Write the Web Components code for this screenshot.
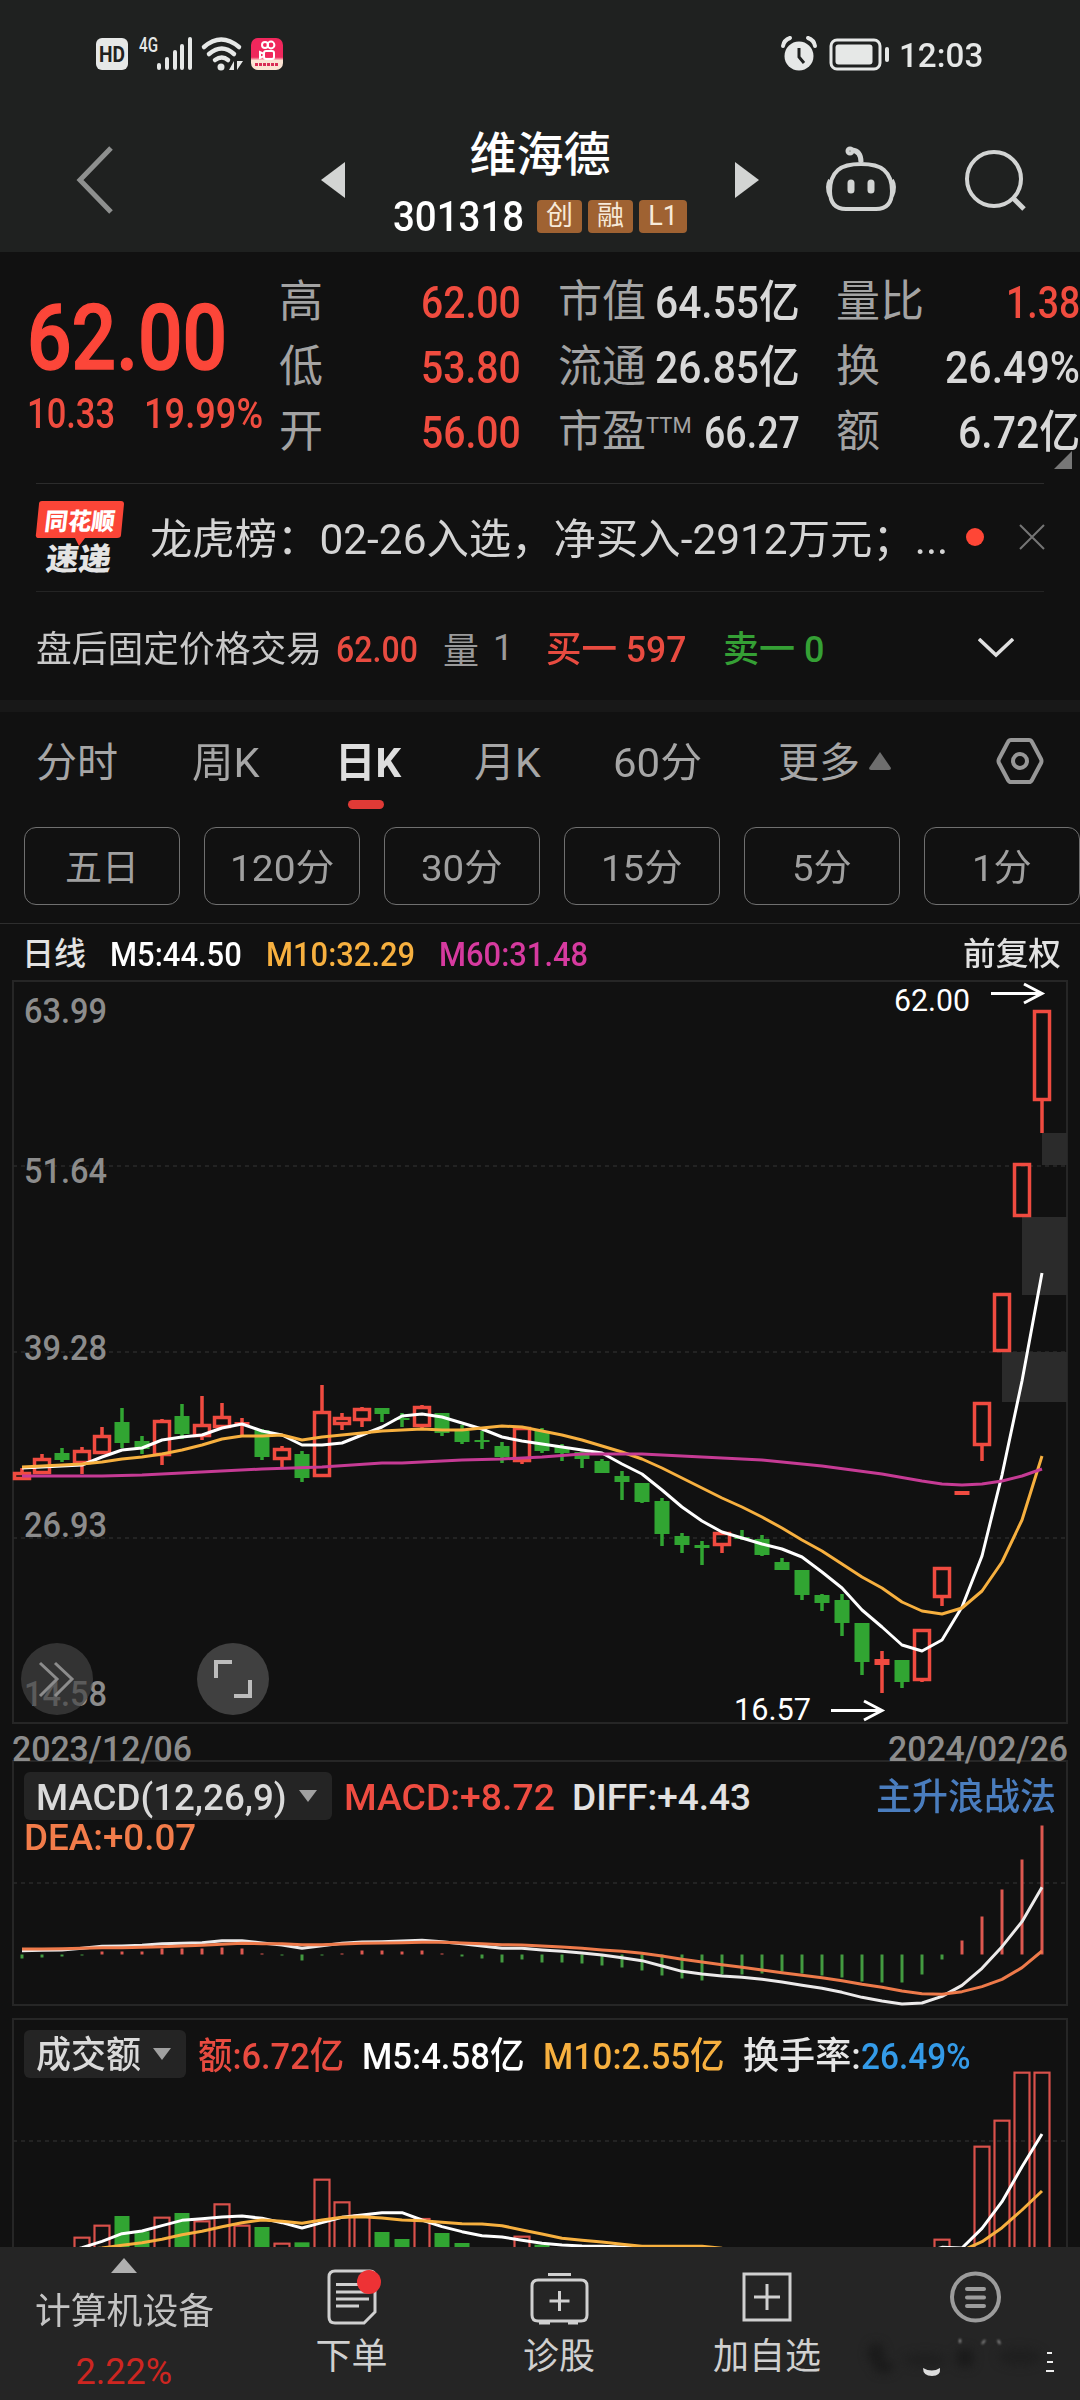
<!DOCTYPE html>
<html lang="zh-CN">
<head>
<meta charset="utf-8">
<title>维海德 301318</title>
<style>
    body {
        margin: 0;
        width: 1080px;
        height: 2400px;
        overflow: hidden;
        background: #111;
        color: #d0d0d0;
        font-family: Roboto, "Noto Sans CJK SC", sans-serif;
    }
</style>
</head>
<body>
<stock-app></stock-app>

<script>
const COLORS = {
    up: '#f04b40',
    down: '#31a532',
    ma5: '#ffffff',
    ma10: '#f7b03f',
    ma60: '#c63b95',
    dea: '#ee7a4a',
    grid: '#262626'
};

const STEP = 20;
const FIRST_X = 22;

// [direction, high, body top, body bottom, low]
const CANDLES = [
    ['r', 1468, 1472, 1480, 1480], ['r', 1454, 1458, 1474, 1474], ['g', 1448, 1453, 1460, 1462],
    ['r', 1447, 1450, 1464, 1474], ['r', 1427, 1435, 1454, 1454], ['g', 1408, 1422, 1443, 1448],
    ['g', 1436, 1441, 1449, 1454], ['r', 1419, 1420, 1456, 1465], ['g', 1404, 1416, 1434, 1439],
    ['r', 1396, 1424, 1437, 1440], ['r', 1403, 1416, 1428, 1428], ['r', 1418, 1422, 1425, 1437],
    ['g', 1429, 1430, 1457, 1460], ['r', 1446, 1448, 1460, 1468], ['g', 1451, 1454, 1478, 1482],
    ['r', 1385, 1411, 1477, 1477], ['r', 1413, 1417, 1425, 1430], ['r', 1407, 1408, 1421, 1427],
    ['g', 1408, 1408, 1414, 1422], ['g', 1413, 1418, 1420, 1427], ['r', 1405, 1406, 1427, 1429],
    ['g', 1413, 1413, 1433, 1436], ['g', 1425, 1431, 1442, 1444], ['g', 1431, 1440, 1442, 1449],
    ['g', 1442, 1446, 1457, 1463], ['r', 1427, 1427, 1462, 1464], ['g', 1428, 1431, 1451, 1453],
    ['g', 1444, 1447, 1453, 1461], ['g', 1451, 1452, 1459, 1468], ['g', 1459, 1461, 1473, 1473],
    ['g', 1471, 1476, 1482, 1500], ['g', 1483, 1483, 1502, 1503], ['g', 1498, 1501, 1534, 1546],
    ['g', 1533, 1536, 1545, 1553], ['g', 1541, 1545, 1548, 1565], ['r', 1532, 1532, 1546, 1553],
    ['g', 1530, 1537, 1539, 1540], ['g', 1535, 1539, 1555, 1556], ['g', 1558, 1562, 1570, 1570],
    ['g', 1570, 1570, 1595, 1600], ['g', 1594, 1595, 1603, 1611], ['g', 1594, 1600, 1623, 1636],
    ['g', 1623, 1623, 1662, 1675], ['r', 1651, 1659, 1665, 1693], ['g', 1660, 1660, 1682, 1688],
    ['r', 1629, 1629, 1681, 1682], ['r', 1567, 1567, 1598, 1606], ['r', 1491, 1491, 1495, 1495],
    ['r', 1402, 1402, 1446, 1461], ['r', 1293, 1293, 1352, 1352], ['r', 1163, 1163, 1217, 1217],
    ['r', 1010, 1010, 1101, 1133]
];

const MA5 = [1468, 1467, 1466, 1465, 1457, 1450, 1448, 1440, 1437, 1435, 1428, 1424, 1431, 1435, 1445, 1445,
    1443, 1435, 1427, 1416, 1414, 1417, 1423, 1429, 1437, 1441, 1444, 1447, 1450, 1453, 1464, 1474, 1490, 1507,
    1521, 1532, 1538, 1544, 1549, 1557, 1572, 1588, 1610, 1627, 1645, 1651, 1640, 1607, 1556, 1475, 1381, 1273];
const MA10 = [1467, 1466, 1465, 1464, 1462, 1459, 1457, 1454, 1450, 1445, 1439, 1436, 1436, 1435, 1440, 1437,
    1435, 1433, 1431, 1430, 1429, 1430, 1430, 1428, 1426, 1427, 1431, 1435, 1440, 1446, 1452, 1459, 1468, 1478,
    1488, 1498, 1507, 1517, 1528, 1540, 1551, 1564, 1577, 1588, 1602, 1611, 1614, 1608, 1591, 1562, 1520, 1456];
const MA60 = [[0, 1476], [4, 1476], [6, 1475], [12, 1469], [15, 1467], [18, 1463], [19, 1463], [22, 1460],
    [24, 1459], [26, 1457], [28, 1454], [31, 1454], [34, 1457], [37, 1460], [40, 1466], [43, 1474], [45, 1481],
    [46, 1484], [47, 1485], [48, 1484], [49, 1481], [50, 1476], [51, 1469]];

const MACD_BARS = [-4, -3, -2, -1, 3, 3, 3, 6, 6, 6, 7, 6, 1, -1, -6, -1, 1, 4, 4, 3, 4, 1, -2, -4, -8, -5, -8,
    -8, -9, -11, -13, -16, -21, -24, -26, -20, -20, -19, -17, -19, -21, -23, -27, -28, -28, -20, -5, 14, 38, 65,
    95, 129];
// MACD and turnover lines are kept in thirds of a pixel
const DIFF = [572, 571, 570, 565, 559, 558, 556, 551, 550, 548, 542, 542, 549, 555, 565, 557, 550, 546, 545, 543,
    541, 545, 551, 558, 565, 565, 570, 574, 579, 585, 593, 602, 618, 634, 642, 648, 652, 658, 666, 676, 685, 697,
    712, 723, 732, 729, 709, 676, 625, 560, 485, 382];
const DEA = [567, 567, 566, 565, 563, 563, 562, 560, 558, 556, 553, 550, 551, 551, 554, 554, 552, 550, 549, 548,
    547, 547, 549, 551, 554, 555, 558, 561, 565, 570, 574, 580, 588, 598, 606, 614, 622, 630, 638, 646, 653, 662,
    673, 682, 693, 701, 703, 695, 680, 658, 623, 573];
const VOLUMES = {
    3: 710, 4: 674, 5: 648, 6: 694, 7: 650, 8: 639, 9: 661, 10: 610, 11: 674, 12: 681, 13: 728, 14: 727,
    15: 536, 16: 604, 17: 643, 18: 696, 19: 717, 20: 654, 21: 699, 22: 729, 25: 707, 26: 734, 46: 716,
    48: 437, 49: 359, 50: 215, 51: 215
};
const VOL5 = [790, 775, 760, 743, 724, 701, 693, 677, 661, 656, 651, 648, 655, 668, 684, 668, 652, 645, 638, 638,
    660, 680, 695, 707, 711, 721, 730, 735, 738, 739, 741, 745, 760, 770, 770, 770, 770, 770, 770, 770, 770, 770,
    770, 770, 770, 760, 742, 744, 685, 605, 500, 402];
const VOL10 = [780, 770, 760, 750, 744, 736, 728, 718, 704, 694, 680, 668, 660, 664, 670, 660, 652, 650, 654, 660,
    662, 667, 671, 672, 677, 690, 702, 715, 721, 726, 733, 739, 739, 739, 739, 745, 760, 770, 770, 770, 770, 770,
    770, 770, 770, 770, 765, 752, 725, 683, 630, 573];

const xAt = i => FIRST_X + i * STEP;
const pointsOf = (values, top, scale) => values.map((v, i) => `${xAt(i)},${top + v / scale}`).join(' ');
const line = (points, color, width = 3) =>
    `<polyline points="${points}" fill="none" stroke="${color}" stroke-width="${width}" stroke-linejoin="round"/>`;
const dashed = y => `<path d="M13 ${y}H1067" stroke="#2a2a2a" stroke-width="1.5" stroke-dasharray="4 4"/>`;
const label = (text, x, y, width, size, color, weight = 400) =>
    `<text x="${x}" y="${y}" font-size="${size}" font-weight="${weight}" fill="${color}" textLength="${width}" lengthAdjust="spacingAndGlyphs">${text}</text>`;

function define(name, html, setup) {
    const template = document.createElement('template');
    template.innerHTML = html;
    customElements.define(name, class extends HTMLElement {
        constructor() {
            super();
            this.attachShadow({mode: 'open'});
            this.shadowRoot.appendChild(template.content.cloneNode(true));
        }

        connectedCallback() {
            if (setup) {
                setup(this, this.shadowRoot);
            }
        }
    });
}

define('status-bar', `
<style>
    :host { display: flex; align-items: center; box-sizing: border-box; height: 108px; padding: 0 97px 0 96px; background: #1f2120; }
    svg { display: block; fill: #e6e8e7; overflow: visible; }
    .space { flex: 1; }
    fit-text { font-size: 34px; font-weight: 500; color: #e6e8e7; margin: 2px 0 0 9px; }
</style>
<svg width="190" height="36" viewBox="96 36 190 36">
    <rect x="96" y="38" width="32" height="32" rx="6"/>
    <text x="99" y="62" font-size="22" font-weight="700" textLength="26" lengthAdjust="spacingAndGlyphs" style="fill:#1f2120">HD</text>
    <text x="139" y="52" font-size="20" font-weight="500" textLength="19" lengthAdjust="spacingAndGlyphs">4G</text>
    <path d="M159 65v3M167 59v9M175 52v16M182 46v22M190 39v29" stroke="#e6e8e7" stroke-width="4" stroke-linecap="round"/>
    <g fill="none" stroke="#e6e8e7" stroke-width="4.500" stroke-linecap="round">
        <path d="M204 47q17-15 35 0M209 54q13-11 25 0M215 60q7-5 13 0"/>
    </g>
    <circle cx="221" cy="67" r="3.500"/>
    <path d="M234 61v9h-5zM237 70v-9h6z"/>
    <defs><linearGradient id="app" x1="0" y1="0" x2="0" y2="1"><stop offset=".6" stop-color="#f0275c"/><stop offset=".7" stop-color="#fbe3d3"/></linearGradient></defs>
    <rect x="251" y="38" width="32" height="32" rx="7" fill="url(#app)"/>
    <g fill="none" stroke="#fff" stroke-width="2">
        <circle cx="265" cy="45" r="3"/><circle cx="271" cy="45" r="3.400"/>
        <rect x="264" y="51" width="10" height="8" rx="2"/><path d="M264 54l-4-2v6l4-2"/>
    </g>
    <path d="M255 64.500h24" stroke="#d82b55" stroke-width="3" stroke-dasharray="3 1"/>
</svg>
<span class="space"></span>
<svg width="110" height="36" viewBox="780 36 110 36">
    <circle cx="799" cy="56" r="14.500"/>
    <path d="M783 46q1-6 7-8M815 46q-1-6-7-8" fill="none" stroke="#e6e8e7" stroke-width="4" stroke-linecap="round"/>
    <path d="M799 48v9l5 6" fill="none" stroke="#1f2120" stroke-width="3"/>
    <rect x="831" y="40" width="49" height="29" rx="6" fill="none" stroke="#e6e8e7" stroke-width="3"/>
    <rect x="835.500" y="44.500" width="37" height="20" rx="3"/>
    <rect x="885" y="47" width="4" height="15" rx="2"/>
</svg>
<fit-text w="84">12:03</fit-text>
`);

define('stock-header', `
<style>
    :host { display: grid; grid-template-columns: 321px 24px 390px 24px 68px 68px 60px; align-items: center; height: 144px; background: #1f2120; }
    svg { display: block; overflow: visible; }
    .back { margin-left: 76px; }
    .title { display: flex; flex-direction: column; align-items: center; color: #fff; }
    .name { font-size: 47px; font-weight: 500; line-height: 50px; margin-top: 3px; }
    .code { display: flex; align-items: center; gap: 6px; margin-top: 20px; height: 34px; }
    .code fit-text { font-size: 42px; margin-right: 7px; font-weight: 500; }
    .tag { width: 45px; height: 33px; border-radius: 4px; background: #9f6232; color: #f7ead9; font-size: 27px; line-height: 32px; text-align: center; }
    .tag:last-child { width: 48px; }
    .robot { margin-left: 68px; }
    .search { margin-left: 139px; }
</style>
<svg class="back" width="38" height="68" fill="none" stroke="#8e908f" stroke-width="5"><path d="M35 2L4 34L35 66"/></svg>
<svg width="24" height="36" fill="#d2d4d3"><path d="M24 0v36L0 18z"/></svg>
<div class="title">
    <div class="name">维海德</div>
    <div class="code"><fit-text w="131">301318</fit-text><span class="tag">创</span><span class="tag">融</span><span class="tag">L1</span></div>
</div>
<svg width="24" height="36" fill="#d2d4d3"><path d="M0 0v36L24 18z"/></svg>
<svg class="robot" width="68" height="64" viewBox="827 148 68 64" fill="none" stroke="#d2d4d3" stroke-width="4">
    <path d="M861 164q16 0 23 6q8 7 8 21q0 18-16 18h-30q-16 0-16-18q0-14 8-21q7-6 23-6"/>
    <path d="M830 180q-4 7 0 16M892 180q4 7 0 16"/>
    <path d="M861 162q0-11-9-12" stroke-width="5"/><circle cx="850" cy="151" r="2.500"/>
    <path d="M851 183v7M871 183v7" stroke-width="7" stroke-linecap="round"/>
</svg>
<svg class="search" width="60" height="60" fill="none" stroke="#d2d4d3" stroke-width="4"><circle cx="28" cy="29" r="27"/><path d="M48 49l10 10" stroke-width="5"/></svg>
`);

define('quote-cell', `
<style>
    :host { display: flex; justify-content: space-between; align-items: center; height: 65px; color: #d8d8d8; font-size: 45px; font-weight: 500; }
    :host([up]) { color: #f04c3f; }
    .label { font-size: 44px; line-height: 50px; margin: 1px 0 0 -1px; font-weight: 400; color: #a3a3a3; white-space: nowrap; }
    ::slotted(fit-text) { margin-top: 2px; }
</style>
<span class="label"><slot name="label"></slot></span><slot></slot>
`);

define('quote-panel', `
<style>
    :host { display: block; position: relative; box-sizing: border-box; height: 231px; padding: 17px 0 0 27px; }
    .columns { display: grid; grid-template-columns: 253px 241px 241px 242px; }
    .columns > div { width: 241px; }
    .price { color: #fc4639; }
    .last { display: block; font-size: 91px; font-weight: 500; margin-top: 24px; -webkit-text-stroke: 1.500px #fc4639; }
    .change { display: flex; gap: 29px; margin-top: 9px; font-size: 42px; font-weight: 500; color: #f04c3f; }
    .three { margin-left: 38px; }
    .columns > .four { margin-left: 75px; width: 243px; }
    svg { position: absolute; right: 8px; top: 199px; }
    hr { position: absolute; left: 36px; right: 36px; bottom: -1px; height: 1.500px; margin: 0; border: 0; background: #2c2c2c; }
</style>
<div class="columns">
    <div class="price">
        <fit-text class="last" w="200">62.00</fit-text>
        <div class="change"><fit-text w="88">10.33</fit-text><fit-text w="119">19.99%</fit-text></div>
    </div>
    <div>
        <quote-cell up><span slot="label">高</span><fit-text w="100">62.00</fit-text></quote-cell>
        <quote-cell up><span slot="label">低</span><fit-text w="100">53.80</fit-text></quote-cell>
        <quote-cell up><span slot="label">开</span><fit-text w="100">56.00</fit-text></quote-cell>
    </div>
    <div class="three">
        <quote-cell><span slot="label">市值</span><fit-text w="145">64.55亿</fit-text></quote-cell>
        <quote-cell><span slot="label">流通</span><fit-text w="145">26.85亿</fit-text></quote-cell>
        <quote-cell><span slot="label">市盈<span style="font-size:22px;vertical-align:14px;line-height:0">TTM</span></span><fit-text w="96">66.27</fit-text></quote-cell>
    </div>
    <div class="four">
        <quote-cell up><span slot="label">量比</span><fit-text w="74">1.38</fit-text></quote-cell>
        <quote-cell><span slot="label">换</span><fit-text w="135">26.49%</fit-text></quote-cell>
        <quote-cell><span slot="label">额</span><fit-text w="122">6.72亿</fit-text></quote-cell>
    </div>
</div>
<svg width="18" height="18" fill="#777"><path d="M18 0v18H0z"/></svg>
<hr>
`);

define('news-row', `
<style>
    :host { display: flex; align-items: center; box-sizing: border-box; height: 109px; margin: 0 36px; border-bottom: 1px solid #242424; }
    .logo { width: 88px; margin: 2px 26px 0 0; }
    .text { font-size: 42px; color: #d4d4d4; margin-top: 6px; }
    .dot { width: 18px; height: 18px; border-radius: 50%; background: #ff4636; margin-left: 18px; }
    svg { display: block; overflow: visible; }
    .close { margin-left: 36px; }
</style>
<svg class="logo" width="88" height="76" viewBox="37 501 88 76">
    <path d="M43 502h79q3 0 3 3l-3 31q0 3-4 3H86l-6 8l-4-8H40q-4 0-3-4l3-30q0-3 3-3z" fill="#fb4537"/>
    <g fill="#fff" font-weight="900" transform="skewX(-7)">
        <text x="110" y="531" font-size="24" textLength="70" lengthAdjust="spacingAndGlyphs">同花顺</text>
        <text x="116" y="571" font-size="31" textLength="65" lengthAdjust="spacingAndGlyphs" fill="#e4e4e4">速递</text>
    </g>
</svg>
<fit-text class="text" w="798">龙虎榜：02-26入选，净买入-2912万元；...</fit-text>
<span class="dot"></span>
<svg class="close" width="24" height="24" stroke="#757575" stroke-width="2"><path d="M0 0L24 24M24 0L0 24"/></svg>
`);

define('after-hours', `
<style>
    :host { display: grid; grid-template-columns: 300px 107px 50px 53px 177px 255px 36px; align-items: center; height: 108px; padding: 4px 0 0 36px; box-sizing: border-box; font-size: 36px; color: #9a9a9a; }
    fit-text { margin-top: 3px; }
    .name { color: #c8c8c8; }
    .up { color: #e84b40; font-weight: 500; }
    .down { color: #35a035; font-weight: 500; }
</style>
<fit-text class="name" w="286">盘后固定价格交易</fit-text>
<fit-text class="up" w="82">62.00</fit-text>
<span>量</span>
<span>1</span>
<fit-text class="up" w="140">买一 597</fit-text>
<fit-text class="down" w="101">卖一 0</fit-text>
<svg width="36" height="20" fill="none" stroke="#e0e0e0" stroke-width="3.500"><path d="M1 1l17 16L35 1"/></svg>
`);

define('period-tabs', `
<style>
    :host { display: block; box-sizing: border-box; border-top: 12px solid #181818; height: 224px; border-bottom: 1px solid #2e2e2e; }
    nav { display: grid; grid-template-columns: 156px 143px 139px 139px 165px 217px 48px; align-items: center; height: 98px; padding-left: 37px; font-size: 41px; color: #a6a6a6; }
    nav fit-text { margin: 4px 0 0 -1px; }
    .on { position: relative; font-weight: 700; color: #dedede; }
    .on::after { content: ""; position: absolute; left: 13px; top: 57px; width: 36px; height: 9px; border-radius: 5px; background: #e03a36; }
    .more { display: flex; align-items: center; gap: 9px; }
    .pills { display: flex; gap: 24px; margin-left: 24px; padding-top: 17px; }
    .pill { flex: none; display: flex; justify-content: center; align-items: center; box-sizing: border-box; width: 156px; height: 78px; border: 1.500px solid #707070; border-radius: 12px; font-size: 37px; color: #a0a0a0; }
    .pill fit-text { margin: 4px 0 0 0; }
</style>
<nav>
    <fit-text w="82">分时</fit-text>
    <fit-text w="68">周K</fit-text>
    <fit-text class="on" w="66">日K</fit-text>
    <fit-text w="67">月K</fit-text>
    <fit-text w="89">60分</fit-text>
    <span class="more"><fit-text w="82">更多</fit-text><svg width="22" height="18" fill="#6e6e6e"><path d="M11 0L22 16q0 2-2 2H2q-2 0-2-2z"/></svg></span>
    <svg width="48" height="46" fill="none" stroke="#979797" stroke-width="4"><path d="M15 2h18q2 0 3 2l9 17q1 2 0 4l-9 17q-1 2-3 2H15q-2 0-3-2L3 25q-1-2 0-4L12 4q1-2 3-2z"/><circle cx="24" cy="23" r="7"/></svg>
</nav>
<div class="pills">
    <span class="pill"><fit-text w="74">五日</fit-text></span>
    <span class="pill"><fit-text w="104">120分</fit-text></span>
    <span class="pill"><fit-text w="82">30分</fit-text></span>
    <span class="pill"><fit-text w="82">15分</fit-text></span>
    <span class="pill"><fit-text w="60">5分</fit-text></span>
    <span class="pill"><fit-text w="60">1分</fit-text></span>
</div>
`);

define('ma-legend', `
<style>
    :host { display: grid; grid-template-columns: 88px 156px 173px 524px 98px; align-items: center; height: 56px; padding: 4px 0 0 22px; box-sizing: border-box; font-size: 34px; font-weight: 500; }
    .cn { font-size: 32px; color: #e2e2e2; }
</style>
<fit-text class="cn" w="64">日线</fit-text>
<fit-text w="132" style="color:#fff">M5:44.50</fit-text>
<fit-text w="149" style="color:#f7b03f">M10:32.29</fit-text>
<fit-text w="149" style="color:#d63a9f">M60:31.48</fit-text>
<fit-text class="cn" w="98">前复权</fit-text>
`);

define('k-chart', `
<style>
    :host { display: block; position: relative; z-index: 1; height: 780px; }
    svg { display: block; overflow: visible; }
</style>
<svg width="1080" height="780" viewBox="0 980 1080 780"></svg>
`, (host, root) => {
    const gaps = [[1042, 1133, 32], [1022, 1217, 78], [1002, 1352, 50]]
        .map(([x, y, h]) => `<rect x="${x}" y="${y}" width="${1067 - x}" height="${h}" fill="#2b2b2b"/>`).join('');

    const candles = CANDLES.map(([dir, high, top, bottom, low], i) => {
        const x = xAt(i);
        const color = dir === 'r' ? COLORS.up : COLORS.down;
        const wicks = `<path d="M${x} ${high}V${top}M${x} ${bottom}V${low}" stroke="${color}" stroke-width="3.500"/>`;
        if (dir === 'g' || bottom - top < 7) {
            return `${wicks}<rect x="${x - 7.5}" y="${top}" width="15" height="${bottom - top}" fill="${color}"/>`;
        }
        return `${wicks}<rect x="${x - 7.5}" y="${top + 1.5}" width="15" height="${bottom - top - 3}" fill="none" stroke="${color}" stroke-width="3.500"/>`;
    }).join('');

    const ma60 = MA60.map(([i, y]) => `${xAt(i)},${y}`).join(' ');
    const gray = '#8c8c8c';

    root.querySelector('svg').innerHTML = `
        <path d="M13 981H1067V1723H13z" fill="none" stroke="${COLORS.grid}" stroke-width="2"/>
        ${dashed(1166)}${dashed(1352)}${dashed(1538)}
        ${gaps}
        ${label('63.99', 24, 1023, 83, 35, gray, 500)}
        ${label('51.64', 24, 1183, 83, 35, gray, 500)}
        ${label('39.28', 24, 1360, 83, 35, gray, 500)}
        ${label('26.93', 24, 1537, 83, 35, gray, 500)}
        ${label('14.58', 24, 1706, 83, 35, gray, 500)}
        ${candles}
        ${line(pointsOf(MA5, 0, 1), COLORS.ma5)}
        ${line(pointsOf(MA10, 0, 1), COLORS.ma10)}
        ${line(ma60, COLORS.ma60)}
        ${label('62.00', 894, 1011, 76, 31, '#fff')}
        ${label('16.57', 734, 1720, 77, 31, '#fff')}
        <g fill="none" stroke="#fff" stroke-width="3">
            <path d="M991 993.500h50M1024 984l18 9.500l-18 9.500"/>
            <path d="M831 1710.500h50M864 1701l18 9.500l-18 9.500"/>
        </g>
        <circle cx="57" cy="1679" r="36" fill="#444" fill-opacity=".68"/>
        <path d="M40 1663l17 16l-17 17M55 1663l17 16l-17 17" fill="none" stroke="#8c8c8c" stroke-width="3"/>
        <circle cx="233" cy="1679" r="36" fill="#404040"/>
        <path d="M216 1678v-16h16M234 1696h16v-16" fill="none" stroke="#bdbdbd" stroke-width="4"/>
        ${label('2023/12/06', 12, 1761, 180, 35, gray, 500)}
        ${label('2024/02/26', 888, 1761, 180, 35, gray, 500)}`;
});

define('indicator-chip', `
<style>
    :host { display: flex; align-items: center; gap: 12px; box-sizing: border-box; height: 48px; padding: 0 15px 0 12px; border-radius: 6px; background: #242424; color: #dadada; font-size: 37px; }
    ::slotted(fit-text) { margin-top: 3px; }
</style>
<slot></slot><svg width="18" height="12" fill="#a0a0a0"><path d="M0 0h18L9 12z"/></svg>
`);

define('macd-chart', `
<style>
    :host { display: block; position: relative; box-sizing: border-box; height: 252px; padding: 12px 24px 0; font-size: 37px; font-weight: 500; }
    .bg { position: absolute; left: 0; top: 0; z-index: -1; overflow: visible; }
    .row { display: flex; align-items: center; }
    .row > fit-text { margin-top: 2px; }
    .row indicator-chip { margin-right: 12px; }
    .dea { display: block; margin-top: -1px; color: #f27c4a; }
</style>
<svg class="bg" width="1080" height="252" viewBox="0 1760 1080 252"></svg>
<div class="row">
    <indicator-chip><fit-text w="251">MACD(12,26,9)</fit-text></indicator-chip>
    <fit-text w="211" style="color:#ee4c41">MACD:+8.72</fit-text>
    <fit-text w="179" style="color:#e2e2e2;margin-left:17px">DIFF:+4.43</fit-text>
    <fit-text w="180" style="color:#4a7dbe;margin-left:auto">主升浪战法</fit-text>
</div>
<fit-text class="dea" w="172">DEA:+0.07</fit-text>
`, (host, root) => {
    const bars = MACD_BARS.map((v, i) =>
        `<path d="M${xAt(i)} 1954.500v${-v}" stroke="${v > 0 ? '#dd5850' : '#439a40'}" stroke-width="3"/>`).join('');

    root.querySelector('.bg').innerHTML = `
        <path d="M13 1761H1067V2005H13z" fill="none" stroke="${COLORS.grid}" stroke-width="2"/>
        ${dashed(1883)}
        ${bars}
        ${line(pointsOf(DIFF, 1760, 3), '#eceaea')}
        ${line(pointsOf(DEA, 1760, 3), COLORS.dea)}`;
});

define('volume-chart', `
<style>
    :host { display: block; position: relative; box-sizing: border-box; height: 235px; padding: 18px 24px 0; font-size: 37px; font-weight: 500; overflow: hidden; }
    .bg { position: absolute; left: 0; top: 0; z-index: -1; }
    .row { display: flex; align-items: center; }
    .row > fit-text { margin: 4px 18px 0 0; }
    .row indicator-chip { margin-right: 12px; }
</style>
<svg class="bg" width="1080" height="235" viewBox="0 2012 1080 235"></svg>
<div class="row">
    <indicator-chip><fit-text w="105">成交额</fit-text></indicator-chip>
    <fit-text w="146" style="color:#e84b40">额:6.72亿</fit-text>
    <fit-text w="163" style="color:#fff">M5:4.58亿</fit-text>
    <fit-text w="182" style="color:#f7b03f">M10:2.55亿</fit-text>
    <fit-text w="118" style="color:#e6e6e6;margin-right:0">换手率:</fit-text>
    <fit-text w="110" style="color:#349be8">26.49%</fit-text>
</div>
`, (host, root) => {
    const bars = Object.entries(VOLUMES).map(([i, v]) => {
        const x = xAt(Number(i));
        const y = 2000 + v / 3;
        return CANDLES[i][0] === 'g'
            ? `<rect x="${x - 7.5}" y="${y}" width="15" height="300" fill="${COLORS.down}"/>`
            : `<rect x="${x - 7.5}" y="${y + 1}" width="15" height="300" fill="none" stroke="#d9514b" stroke-width="2.200"/>`;
    }).join('');

    root.querySelector('.bg').innerHTML = `
        <path d="M13 2019H1067V2300H13z" fill="none" stroke="${COLORS.grid}" stroke-width="2"/>
        ${dashed(2141)}
        ${bars}
        ${line(pointsOf(VOL5, 2000, 3), COLORS.ma5)}
        ${line(pointsOf(VOL10, 2000, 3), COLORS.ma10)}`;
});

define('bottom-item', `
<style>
    :host { display: flex; flex-direction: column; align-items: center; padding-top: 22px; font-size: 36px; color: #d0d0d0; }
    .icon { height: 56px; }
    .text { line-height: 50px; margin-top: 7px; white-space: nowrap; }
</style>
<div class="icon"><slot name="icon"></slot></div>
<div class="text"><slot></slot></div>
`);

define('bottom-bar', `
<style>
    :host { display: grid; grid-template-columns: 248px 207px 208px 208px 209px; height: 153px; background: #252525; position: relative; z-index: 1; }
    svg { display: block; overflow: visible; fill: none; stroke: #d0d0d0; stroke-width: 3; }
    .sector { display: flex; flex-direction: column; align-items: center; color: #c4c4c4; font-size: 36px; }
    .sector svg { margin-top: 11px; fill: #b0b0b0; stroke: none; }
    .sector fit-text { margin-top: 21px; }
    .sector .rate { color: #cd2621; margin-top: 24px; }
</style>
<div class="sector">
    <svg width="26" height="15"><path d="M13 0L26 15H0z"/></svg>
    <fit-text w="179">计算机设备</fit-text>
    <fit-text class="rate" w="97">2.22%</fit-text>
</div>
<bottom-item>
    <svg slot="icon" width="50" height="56" viewBox="327 2269 50 56">
        <path d="M335 2271h35q5 0 5 5v36l-11 11h-29q-6 0-6-6v-40q0-6 6-6zM336 2284.500h33M336 2292h33M336 2299h33M336 2306h23"/>
        <circle cx="369" cy="2282" r="12" fill="#ee3235" stroke="none"/>
    </svg>下单
</bottom-item>
<bottom-item>
    <svg slot="icon" width="58" height="56" viewBox="530 2269 58 56">
        <path d="M538 2280h43q6 0 6 6v29q0 6-6 6h-43q-6 0-6-6v-29q0-6 6-6zM548 2274.500h23M559.500 2291v20M549.500 2301h20M539 2323h11M568 2323h10"/>
    </svg>诊股
</bottom-item>
<bottom-item>
    <svg slot="icon" width="50" height="56" viewBox="742 2269 50 56">
        <path d="M744 2274h46v46h-46zM767 2284v26M754 2297h26"/>
    </svg>加自选
</bottom-item>
<bottom-item>
    <svg slot="icon" width="206" height="112" viewBox="873 2269 206 112">
        <g stroke="#9c9c9c" stroke-width="4"><circle cx="975.500" cy="2297" r="23.500"/><path d="M967 2289h17M967 2297.500h17M967 2306h17" stroke-linecap="round"/></g>
        <g fill="#1a1a1a" stroke="none" filter="blur(5px)"><ellipse cx="876" cy="2354" rx="8" ry="11"/><ellipse cx="884" cy="2367" rx="10" ry="6"/><ellipse cx="965" cy="2358" rx="9" ry="10"/><ellipse cx="925" cy="2360" rx="22" ry="7" opacity=".5"/><ellipse cx="1020" cy="2357" rx="22" ry="9" opacity=".5"/></g>
        <g stroke="#909090" filter="blur(1px)" stroke-width="2"><path d="M960 2339v4M985 2340l-3 4M998 2340l2 4"/></g>
        <path d="M923 2368q0 8 9 8t8-8q-8 5-17 0z" fill="#ddd" stroke="none"/>
        <path d="M1047 2353h5M1047 2362h6M1046 2371h8" stroke="#eee" stroke-width="2"/>
    </svg>
</bottom-item>
`);

define('stock-app', `
<style>
    :host { display: flex; flex-direction: column; width: 1080px; height: 2400px; overflow: hidden; position: relative; z-index: 0; }
    status-bar, stock-header, quote-panel, news-row, after-hours, period-tabs, ma-legend, k-chart, macd-chart, volume-chart, bottom-bar { flex: none; }
</style>
<status-bar></status-bar>
<stock-header></stock-header>
<quote-panel></quote-panel>
<news-row></news-row>
<after-hours></after-hours>
<period-tabs></period-tabs>
<ma-legend></ma-legend>
<k-chart></k-chart>
<macd-chart></macd-chart>
<volume-chart></volume-chart>
<bottom-bar></bottom-bar>
`);

// Squeezes a line of text to the width in its "w" attribute.
// Registered last: the text can only be measured once its parents are styled.
define('fit-text', `
<style>
    :host { display: inline-block; flex: none; line-height: 1; white-space: nowrap; }
    span { display: inline-block; transform-origin: 0 50%; line-height: 1; vertical-align: top; }
</style>
<span><slot></slot></span>
`, (host, root) => {
    const span = root.querySelector('span');
    const width = Number(host.getAttribute('w'));
    host.style.width = `${width}px`;
    span.style.transform = `scaleX(${width / span.offsetWidth})`;
});
</script>
</body>
</html>
